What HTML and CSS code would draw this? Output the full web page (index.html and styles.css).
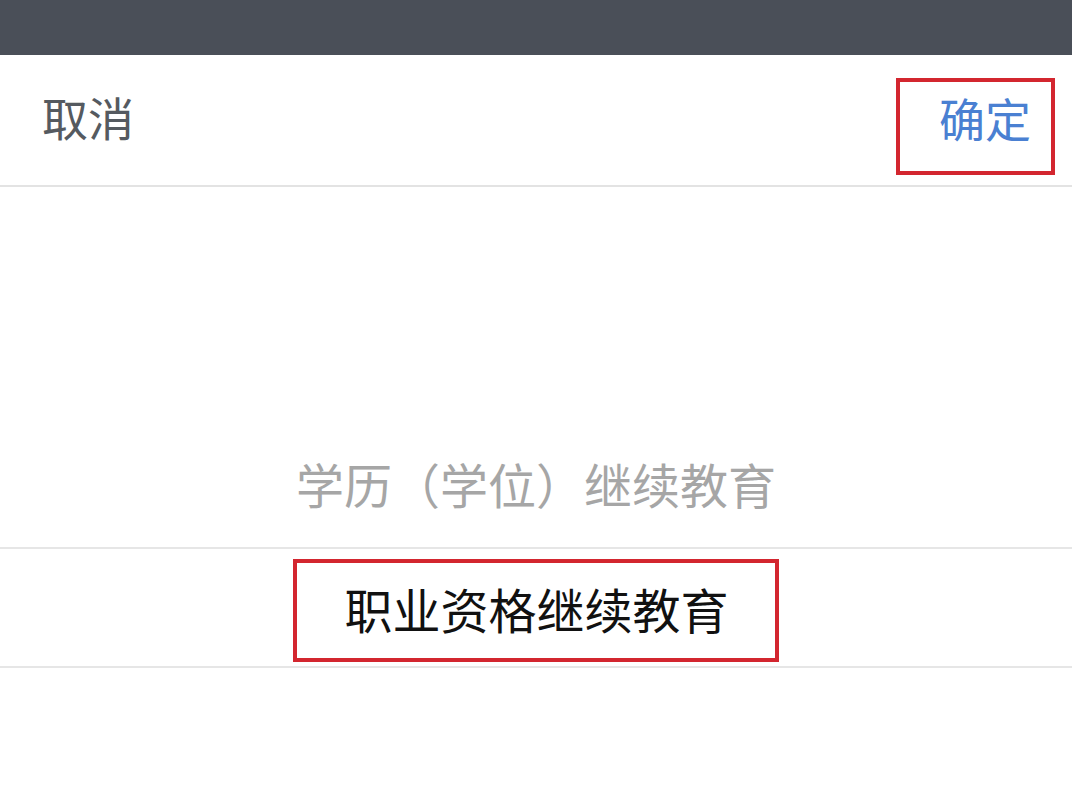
FILE: index.html
```html
<!DOCTYPE html>
<html lang="zh-CN">
<head>
<meta charset="utf-8">
<title>选择</title>
<link rel="stylesheet" href="styles.css">
</head>
<body>
<div class="topbar"></div>
<div class="header">
  <span class="cancel">取消</span>
  <span class="confirm"><span class="confirm-text">确定</span></span>
</div>
<div class="picker">
  <div class="row"></div>
  <div class="row"></div>
  <div class="row"><span class="item">学历（学位）继续教育</span></div>
  <div class="row selected"><span class="item active">职业资格继续教育</span></div>
  <div class="row"></div>
</div>
</body>
</html>
```

FILE: styles.css
```css
html, body {
  margin: 0;
  padding: 0;
  background: #ffffff;
  font-family: "Noto Sans CJK SC", "Noto Sans", sans-serif;
}
body {
  width: 1072px;
  height: 792px;
  overflow: hidden;
}
.topbar {
  height: 55px;
  background: #4a4f58;
}
.header {
  height: 130px;
  border-bottom: 2px solid #e3e3e3;
  display: flex;
  align-items: flex-start;
  justify-content: space-between;
  box-sizing: content-box;
}
.cancel {
  margin-left: 42px;
  margin-top: 35px;
  font-size: 46px;
  line-height: 52px;
  color: #555a60;
}
.confirm {
  margin-top: 23px;
  margin-right: 17px;
  width: 151px;
  height: 89px;
  border: 4px solid #d3262f;
  display: flex;
  align-items: flex-start;
  justify-content: flex-end;
}
.confirm-text {
  margin-top: 9px;
  margin-right: 20px;
  font-size: 46px;
  line-height: 52px;
  color: #4a80d2;
}
.picker {
  display: flex;
  flex-direction: column;
}
.row {
  height: 120px;
  display: flex;
  align-items: center;
  justify-content: center;
}
.row.selected {
  height: 117px;
  border-top: 2px solid #e6e6e6;
  border-bottom: 2px solid #e6e6e6;
}
.item {
  font-size: 48px;
  line-height: 56px;
  color: #a6a6a6;
  margin-top: -8px;
}
.item.active {
  color: #111111;
  border: 4px solid #d3262f;
  padding: 17px 46px 22px 47px;
  margin-top: 6px;
}
```
